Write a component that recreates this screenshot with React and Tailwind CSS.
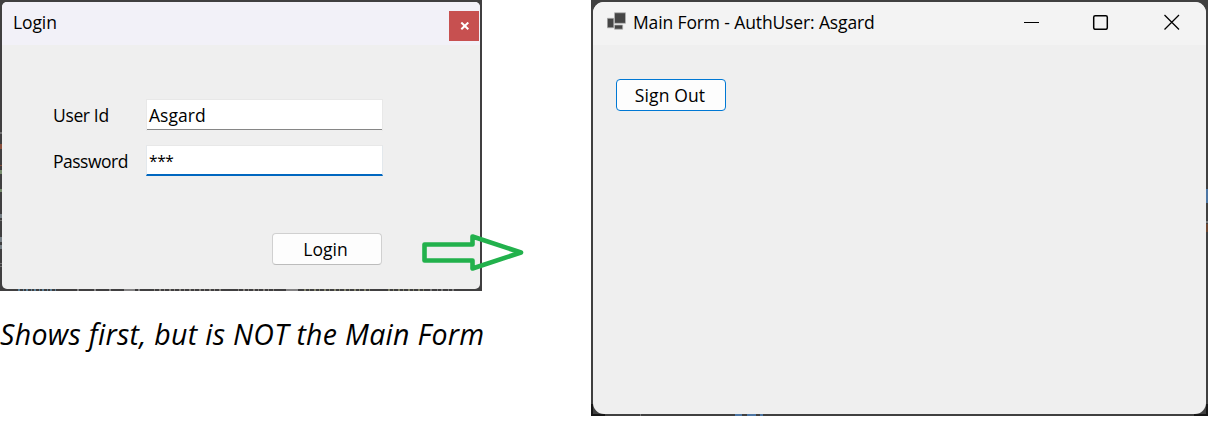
function Caption({ children, className = "text-[17.5px]" }) {
  return <span className={"block leading-6 whitespace-nowrap text-black " + className}>{children}</span>;
}

function LoginWindow() {
  return (
    <section className="relative h-[291px] w-[482px] bg-[#403f40] p-0.5">
      <svg className="absolute inset-0" width="482" height="291" viewBox="0 0 482 291" fill="none" strokeWidth="2">
        <g opacity="0.7">
          <path d="M1 132v2M1 220v1M1 263v1M1 266v1" stroke="#888" />
          <path d="M1 144v5M1 165v1" stroke="#a8583c" />
          <path d="M1 170v4M1 189v3" stroke="#8fae82" />
          <path d="M1 214v4M1 237v5M1 245v4" stroke="#8d9ba3" />
        </g>
        <g opacity="0.65">
          <path d="M18 290H56" stroke="#6ca2c4" strokeDasharray="2 3 1 2" />
          <path d="M77 290h2M94 290h2M109 290h2M124 290h11M138 290h2M286 290h12" stroke="#aaa" />
          <path d="M154 290H224M238 290H274" stroke="#a7a299" strokeDasharray="1 4 2 3" />
          <path d="M304 290H372M388 290H424" stroke="#a3a782" strokeDasharray="2 3 1 4" />
          <path d="M430 290H458" stroke="#999" strokeDasharray="2 5 1 3" />
        </g>
      </svg>
      <div className="relative flex h-full flex-col overflow-hidden rounded-[5px] bg-[#efefef]">
        <header className="flex h-[43px] shrink-0 items-start justify-between bg-[#f2f1f8] pr-px pl-[11px]">
          <Caption className="pt-2 text-[17.5px] tracking-[-0.1px]">Login</Caption>
          <button className="mt-[9px] flex size-[30px] items-center justify-center bg-[#c75050]">
            <svg width="10" height="8" viewBox="0 0 10 8" className="ml-px" fill="none" stroke="#fff" strokeWidth="2">
              <path d="M1.3 0.5 8.3 7.3M8.3 0.5 1.3 7.3" />
            </svg>
          </button>
        </header>
        <div className="flex flex-col pt-[54px] pl-[51px]">
          <div className="flex h-8">
            <label className="w-[93px] pt-1">
              <Caption className="text-[17.5px] tracking-[-0.35px]">User Id</Caption>
            </label>
            <div className="h-8 w-[237px] border border-b-0 border-[#e8e8e8]">
              <div className="h-[30px] border-b border-[#868686] bg-white pt-[3px] pl-0.5">
                <Caption className="text-[17.5px] tracking-[0.05px]">Asgard</Caption>
              </div>
            </div>
          </div>
          <div className="mt-3.5 flex h-8">
            <label className="w-[93px] pt-1">
              <Caption className="text-[17.5px] tracking-[-0.5px]">Password</Caption>
            </label>
            <div className="h-[31px] w-[237px] border-x border-t border-b-2 border-x-[#e3e8ec] border-t-[#e8e8e8] border-b-[#0067c0] bg-white pt-[3px] pl-0.5">
              <Caption className="text-[15.5px] tracking-[-0.4px]">***</Caption>
            </div>
          </div>
          <button className="mt-14 ml-[219px] flex h-8 w-[110px] justify-center rounded-[4px] border border-[#d0d0d0] border-b-[#bcbcbc] bg-[#fdfdfd] pt-[3px] pr-[3px]">
            <Caption className="text-[17.5px] tracking-[0.05px]">Login</Caption>
          </button>
        </div>
      </div>
    </section>
  );
}

function MainWindow() {
  return (
    <section className="relative h-[416px] w-[617px] bg-[#404040] p-0.5">
      <svg className="absolute inset-0" width="617" height="416" viewBox="0 0 617 416" fill="none" strokeWidth="2">
        <path d="M0 415h14M603 415h14M616 404v12M1 404v12" stroke="#161616" />
        <path d="M616 189v14M144 415h7M156 415h9M169 415h3" stroke="#4d76a3" />
        <path d="M616 224v8" stroke="#6d4630" />
        <path d="M616 221v2M49 415h1" stroke="#777" />
      </svg>
      <div className="relative flex h-full flex-col overflow-hidden rounded-[11px] bg-[#efefef]">
        <header className="flex h-[43px] shrink-0 items-start bg-[#f3f3f3] pl-3.5">
          <svg width="19" height="18" viewBox="0 0 19 18" className="mt-[10px]" fill="#454545" stroke="#b4b4b4" strokeWidth="0.7">
            <path d="M0.3 6.3h6.5v9.5H0.3zM7.5 0.8h11v10.5h-11zM7.5 13h8.2v4.2H7.5z" />
          </svg>
          <Caption className="ml-[7px] pt-2 text-[17.5px] tracking-[-0.13px]">Main Form - AuthUser: Asgard</Caption>
          <svg width="156" height="16" viewBox="0 0 156 16" className="mt-3 mr-[26px] ml-auto" fill="none" stroke="#000">
            <path d="M0 8.5h15" />
            <rect x="69.7" y="1.7" width="13.6" height="13.6" rx="1.5" strokeWidth="1.5" />
            <path d="M140.5 1 155 15.5M155 1 140.5 15.5" strokeWidth="1.3" />
          </svg>
        </header>
        <button className="mt-[34px] ml-[23px] flex h-8 w-[110px] justify-center rounded-[4px] border border-[#0078d4] bg-[#fdfdfd] pt-[3px] pr-0.5">
          <Caption className="text-[17.5px] tracking-[0.12px]">Sign Out</Caption>
        </button>
      </div>
    </section>
  );
}

export default function App() {
  return (
    <main className="relative flex h-[422px] w-[1227px] items-start gap-[107px] overflow-hidden bg-white font-['Open_Sans',sans-serif]">
      <div className="flex w-[484px] flex-col">
        <LoginWindow />
        <p className="mt-[23px] text-[28.5px] leading-10 tracking-[0.3px] whitespace-nowrap text-black italic">
          Shows first, but is NOT the Main Form
        </p>
      </div>
      <MainWindow />
      <svg className="absolute top-[232px] left-[420px]" width="106" height="42" viewBox="0 0 106 42" fill="none" stroke="#22b14c" strokeWidth="4.6" strokeLinejoin="round">
        <path d="M4.5 12.5H52.5V4.5L101 20.5 52.5 36.5V28.5H4.5Z" />
      </svg>
    </main>
  );
}
